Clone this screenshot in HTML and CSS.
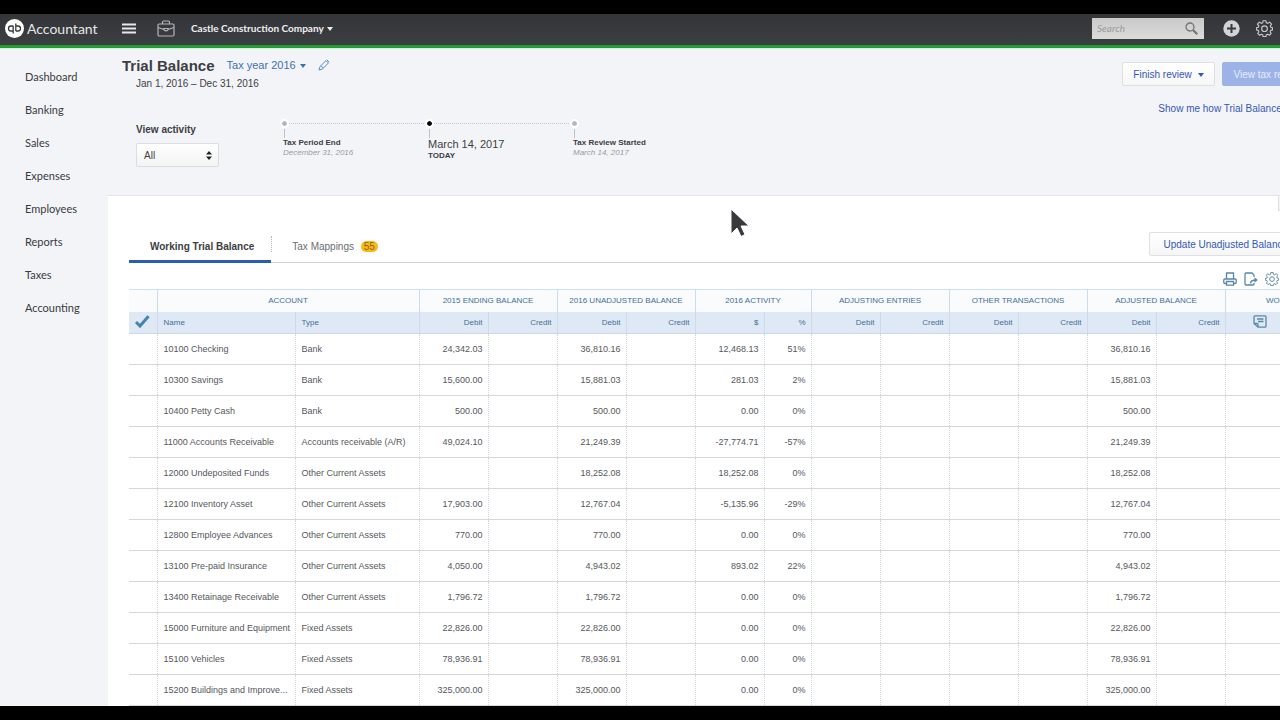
FILE: index.html
```html
<!DOCTYPE html>
<html lang="en">
<head>
    <meta charset="UTF-8">
    <meta name="viewport" content="width=device-width, initial-scale=1.0">
    <title>Trial Balance</title>
    <link rel="stylesheet" href="styles.css">
</head>
<body>
    <header class="topbar">
        <a class="brand" href="#">
            <svg width="19" height="19" viewBox="0 0 19 19" aria-hidden="true">
                <circle cx="9.5" cy="9.5" r="9.5" fill="#fff"/>
                <g fill="none" stroke="#38393c" stroke-width="1.3">
                    <path d="M8.2 6.800v7.800M8.200 7H6a2.500 2.500 0 0 0 0 5h2.200"/>
                    <path d="M10.800 4.400V12M10.800 12H13a2.500 2.500 0 0 0 0-5h-2.200"/>
                </g>
            </svg>
            <span>Accountant</span>
        </a>
        <button class="icon-btn menu-btn" aria-label="Menu">
            <svg width="14" height="11" viewBox="0 0 14 11"><path d="M0 1.5h14M0 5.5h14M0 9.5h14" stroke="#e8e8e8" stroke-width="2"/></svg>
        </button>
        <button class="icon-btn case-btn" aria-label="Accountant tools">
            <svg width="18" height="17" viewBox="0 0 18 17" fill="none" stroke="#b4b5b7" stroke-width="1.2">
                <rect x="1" y="4" width="16" height="12" rx="1.2"/>
                <path d="M5.5 4V2.2Q5.5 1 6.7 1h4.6q1.2 0 1.2 1.2V4M1 7.5l6 2M17 7.5l-6 2M7 8.5h4v1.3q-2 2-4 0z"/>
            </svg>
        </button>
        <button class="company">Castle Construction Company <span class="caret"></span></button>
        <form class="search">
            <input type="text" placeholder="Search" aria-label="Search">
            <button type="button" aria-label="Search">
                <svg width="13" height="13" viewBox="0 0 13 13" fill="none" stroke="#747474"><circle cx="5" cy="5" r="4" stroke-width="1.3"/><path d="M8 8l4.2 4.2" stroke-width="2.2"/></svg>
            </button>
        </form>
        <button class="icon-btn" aria-label="Create">
            <svg width="17" height="17" viewBox="0 0 17 17"><circle cx="8.5" cy="8.5" r="8.2" fill="#d2d3d4"/><path d="M8.5 4v9M4 8.5h9" stroke="#38393c" stroke-width="2"/></svg>
        </button>
        <button class="icon-btn gear-btn" aria-label="Settings">
            <svg width="17" height="17" viewBox="0 0 24 24" fill="none" stroke="#c8c9ca" stroke-width="1.6" stroke-linejoin="round"><use href="#gear"/></svg>
        </button>
    </header>

    <div class="layout">
        <nav class="sidebar">
            <a href="#">Dashboard</a>
            <a href="#">Banking</a>
            <a href="#">Sales</a>
            <a href="#">Expenses</a>
            <a href="#">Employees</a>
            <a href="#">Reports</a>
            <a href="#">Taxes</a>
            <a href="#">Accounting</a>
        </nav>

        <main>
            <section class="summary">
                <div class="summary-left">
                    <div class="title-row">
                        <h1>Trial Balance</h1>
                        <button class="year">Tax year 2016 <span class="caret"></span></button>
                        <button class="icon-btn" aria-label="Edit">
                            <svg width="12" height="12" viewBox="0 0 12 12" fill="none" stroke="#5b8fbe"><path d="M1 11l.9-3.3L8 1.6l2.4 2.4L4.3 10.1zM8.8.8l2.4 2.4M3 6.8l2.3 2.3"/></svg>
                        </button>
                    </div>
                    <p class="period">Jan 1, 2016 – Dec 31, 2016</p>
                    <div class="filters">
                        <div class="filter">
                            <label for="activity">View activity</label>
                            <div class="select">
                                <select id="activity"><option>All</option></select>
                                <svg width="6" height="9" viewBox="0 0 6 9" fill="#222"><path d="M0 3.6L3 0l3 3.6zM0 5.4h6L3 9z"/></svg>
                            </div>
                        </div>
                        <ol class="timeline">
                            <li><strong>Tax Period End</strong><em>December 31, 2016</em></li>
                            <li class="today"><span>March 14, 2017</span><strong>TODAY</strong></li>
                            <li><strong>Tax Review Started</strong><em>March 14, 2017</em></li>
                        </ol>
                    </div>
                </div>
                <div class="summary-right">
                    <div class="actions">
                        <button class="btn">Finish review <span class="caret"></span></button>
                        <button class="btn primary">View tax return</button>
                    </div>
                    <a href="#">Show me how Trial Balance works</a>
                </div>
            </section>

            <section class="panel">
                <button class="handle" aria-label="Collapse"></button>
                <div class="tabs">
                    <button class="tab active">Working Trial Balance</button>
                    <button class="tab">Tax Mappings <span class="badge">55</span></button>
                    <button class="btn update">Update Unadjusted Balances</button>
                </div>
                <div class="tools">
                    <button class="icon-btn" aria-label="Print">
                        <svg width="14" height="14" viewBox="0 0 14 14" fill="none" stroke="#5a87a5" stroke-width="1.3"><path d="M3.5 7V1h7v6M3 11.5H1.8Q.8 11.5.8 10.500V8q0-1 1-1h10.400q1 0 1 1v2.500q0 1-1 1H11M3.500 9.500h7v3.700h-7z"/></svg>
                    </button>
                    <button class="icon-btn" aria-label="Export">
                        <svg width="14" height="14" viewBox="0 0 14 14" fill="none" stroke="#5a87a5" stroke-width="1.3"><path d="M10 5V3L8 1H2Q1 1 1 2v10q0 1 1 1h7q1 0 1-1v-1M6.500 11.500Q6.500 8 12.500 8"/><path d="M10.500 5.200L13.800 8l-3.300 2.800z" fill="#5a87a5" stroke="none"/></svg>
                    </button>
                    <button class="icon-btn" aria-label="Table settings">
                        <svg width="14" height="14" viewBox="0 0 24 24" fill="none" stroke="#5a87a5" stroke-width="1.7" stroke-linejoin="round"><g id="gear"><path d="M10 1h4l.6 3 2 .8L19.200 3 22 5.800 20.200 8.400l.8 2 2.500.6v3l-2.700.6-.8 2L21.500 19 19 21.500l-2.400-1.500-2 .8L14 23.500h-4l-.6-2.700-2-.8L5 21.500 2.500 19 4 16.600l-.8-2L.5 14v-3L3.200 10.400l.8-2L2 5.800 4.800 3 7.400 4.800l2-.8z"/><circle cx="12" cy="12.200" r="4"/></g></svg>
                    </button>
                </div>

                <table>
                    <colgroup>
                        <col class="c-check"><col class="c-name"><col class="c-type">
                        <col class="c-num"><col class="c-num"><col class="c-num"><col class="c-num">
                        <col class="c-num"><col class="c-pct">
                        <col class="c-num"><col class="c-num"><col class="c-num"><col class="c-num">
                        <col class="c-num"><col class="c-num"><col class="c-num"><col class="c-num">
                    </colgroup>
                    <thead>
                        <tr class="groups">
                            <th></th>
                            <th colspan="2">ACCOUNT</th>
                            <th colspan="2">2015 ENDING BALANCE</th>
                            <th colspan="2">2016 UNADJUSTED BALANCE</th>
                            <th colspan="2">2016 ACTIVITY</th>
                            <th colspan="2">ADJUSTING ENTRIES</th>
                            <th colspan="2">OTHER TRANSACTIONS</th>
                            <th colspan="2">ADJUSTED BALANCE</th>
                            <th colspan="2">WORKPAPERS</th>
                        </tr>
                        <tr class="fields">
                            <th class="mark"><svg width="15" height="13" viewBox="0 0 15 13" fill="none" stroke="#4583b0" stroke-width="3"><path d="M1 7l4 4L13.500 1.200"/></svg></th>
                            <th class="text">Name</th>
                            <th class="text">Type</th>
                            <th>Debit</th><th>Credit</th>
                            <th>Debit</th><th>Credit</th>
                            <th>$</th><th>%</th>
                            <th>Debit</th><th>Credit</th>
                            <th>Debit</th><th>Credit</th>
                            <th>Debit</th><th>Credit</th>
                            <th class="mark"><svg width="14" height="13" viewBox="0 0 14 13" fill="none" stroke="#5a87a5" stroke-width="1.3"><path d="M2 .8h10q1 0 1 1v9.400q0 1-1 1H5L1 8.500V1.800q0-1 1-1zM1 8.500h3q1 0 1 1v2.700M4 4h6.500M5 6.500h5.500"/></svg></th>
                            <th></th>
                        </tr>
                    </thead>
                    <tbody id="rows"></tbody>
                </table>
            </section>
        </main>
    </div>

    <svg class="cursor" width="20" height="30" viewBox="0 0 20 30" aria-hidden="true"><path d="M1 1v25l6-6 4 8.500 4-2L11 18h8z" fill="#38393c" stroke="#fff"/></svg>

    <script>
        // name, type, 2015 balance, 2016 balance, change, change %
        const accounts = [
            ['10100 Checking', 'Bank', '24,342.03', '36,810.16', '12,468.13', '51%'],
            ['10300 Savings', 'Bank', '15,600.00', '15,881.03', '281.03', '2%'],
            ['10400 Petty Cash', 'Bank', '500.00', '500.00', '0.00', '0%'],
            ['11000 Accounts Receivable', 'Accounts receivable (A/R)', '49,024.10', '21,249.39', '-27,774.71', '-57%'],
            ['12000 Undeposited Funds', 'Other Current Assets', '', '18,252.08', '18,252.08', '0%'],
            ['12100 Inventory Asset', 'Other Current Assets', '17,903.00', '12,767.04', '-5,135.96', '-29%'],
            ['12800 Employee Advances', 'Other Current Assets', '770.00', '770.00', '0.00', '0%'],
            ['13100 Pre-paid Insurance', 'Other Current Assets', '4,050.00', '4,943.02', '893.02', '22%'],
            ['13400 Retainage Receivable', 'Other Current Assets', '1,796.72', '1,796.72', '0.00', '0%'],
            ['15000 Furniture and Equipment', 'Fixed Assets', '22,826.00', '22,826.00', '0.00', '0%'],
            ['15100 Vehicles', 'Fixed Assets', '78,936.91', '78,936.91', '0.00', '0%'],
            ['15200 Buildings and Improve...', 'Fixed Assets', '325,000.00', '325,000.00', '0.00', '0%']
        ];

        document.getElementById('rows').innerHTML = accounts.map(([name, type, prev, cur, diff, pct]) => `
            <tr>
                <td></td>
                <td class="text">${name}</td>
                <td class="text">${type}</td>
                <td>${prev}</td><td></td>
                <td>${cur}</td><td></td>
                <td>${diff}</td><td>${pct}</td>
                <td></td><td></td>
                <td></td><td></td>
                <td>${cur}</td><td></td>
                <td></td><td></td>
            </tr>
        `).join('');
    </script>
</body>
</html>
```

FILE: styles.css
```css
* {
    box-sizing: border-box;
}

body {
    margin: 0;
    padding: 14px 0;
    height: 100vh;
    display: flex;
    flex-direction: column;
    overflow: hidden;
    background: #000;
    color: #3c3e42;
    font-family: "Liberation Sans", Arial, sans-serif;
    font-size: 10px;
}

button {
    margin: 0;
    padding: 0;
    border: none;
    background: none;
    color: inherit;
    font: inherit;
    cursor: pointer;
    white-space: nowrap;
}

a {
    color: #3358b8;
    text-decoration: none;
}

.icon-btn {
    display: flex;
}

.caret {
    display: inline-block;
    margin-left: 1px;
    border: 3px solid transparent;
    border-top: 4px solid currentColor;
    border-bottom: none;
    vertical-align: 1px;
}

/* Top bar */
.topbar {
    flex: none;
    display: flex;
    align-items: center;
    height: 34px;
    padding: 0 7px 3px 5px;
    background: linear-gradient(#333538, #3c3f42);
    border-bottom: 3px solid #1f9d2f;
    color: #f0f0f0;
    font-family: Lato, sans-serif;
}

.brand {
    display: flex;
    align-items: center;
    gap: 3px;
    width: 117px;
    color: #e6e6e6;
    font-size: 14px;
}

.case-btn {
    margin: 0 16px 0 21px;
}

.company {
    font-size: 10px;
    font-weight: bold;
}

.search {
    display: flex;
    align-items: center;
    width: 112px;
    height: 21px;
    margin: 0 19px 0 auto;
    padding: 0 6px 0 5px;
    background: linear-gradient(#c9c9c9, #dcdcdc);
}

.search input {
    flex: 1;
    min-width: 0;
    padding: 0;
    border: none;
    outline: none;
    background: none;
    font: italic 10px Lato, sans-serif;
}

.search input::placeholder {
    color: #999;
}

.search button {
    display: flex;
}

.gear-btn {
    margin-left: 16px;
}

/* Sidebar */
.layout {
    flex: 1;
    display: flex;
    min-height: 0;
    background: #f3f4f8;
    box-shadow: inset 0 1px #d3f0d8;
}

.sidebar {
    flex: none;
    width: 108px;
    padding: 12px 0 0 25px;
    font-family: Lato, sans-serif;
    font-size: 11px;
}

.sidebar a {
    display: block;
    line-height: 33px;
    color: #393a3d;
}

main {
    flex: 1;
    min-width: 0;
    display: flex;
    flex-direction: column;
    overflow: hidden;
}

/* Title, filters and review actions */
.summary {
    flex: none;
    display: flex;
    justify-content: space-between;
    min-width: 1203px;
    height: 147px;
    padding: 8px 0 0 14px;
}

.title-row {
    display: flex;
    align-items: center;
    gap: 12px;
    height: 18px;
}

h1 {
    margin: 0;
    font-size: 15px;
}

.year {
    color: #3c72a8;
    font-size: 11px;
}

.period {
    margin: 4px 0 0 14px;
    line-height: 12px;
}

.filters {
    display: flex;
    gap: 64px;
    margin: 32px 0 0 14px;
}

.filter label {
    display: block;
    padding-top: 1px;
    line-height: 14px;
    font-weight: bold;
}

.select {
    position: relative;
    width: 83px;
    margin-top: 6px;
}

.select select {
    width: 100%;
    height: 24px;
    padding: 0 7px;
    border: 1px solid #dcdde1;
    border-radius: 2px;
    appearance: none;
    background: linear-gradient(#fff, #f4f4f5);
    color: inherit;
    font: inherit;
}

.select svg {
    position: absolute;
    right: 7px;
    top: 8px;
    pointer-events: none;
}

.timeline {
    display: flex;
    margin: 0;
    padding: 0;
    list-style: none;
}

.timeline li {
    position: relative;
    width: 145px;
    margin-top: 1px;
    padding-top: 14px;
    border-top: 1px dotted #c4c6ca;
    font-size: 8px;
    line-height: 10px;
}

.timeline li:last-child {
    border-top-color: transparent;
}

/* the dot, and the short line down to its text */
.timeline li::before {
    content: "";
    position: absolute;
    left: -3px;
    top: -5px;
    width: 5px;
    height: 5px;
    border: 2px solid #fff;
    border-radius: 50%;
    background: #b4b5b8;
    background-clip: padding-box;
}

.timeline li::after {
    content: "";
    position: absolute;
    left: 1px;
    top: 5px;
    height: 9px;
    border-left: 1px solid #c0c1c5;
}

.timeline li.today::before {
    background-color: #000;
}

.timeline strong,
.timeline em,
.timeline span {
    display: block;
}

.timeline em {
    color: #999ba0;
}

.timeline span {
    font-size: 11px;
    line-height: 13px;
}

.summary-right {
    padding-top: 6px;
}

.actions {
    display: flex;
    gap: 7px;
    margin: 0 0 17px -36px;
}

.btn {
    height: 24px;
    padding: 0 10px;
    border: 1px solid #dfe0e4;
    border-radius: 2px;
    background: linear-gradient(#fff, #f6f6f7);
    color: #3358b8;
}

.btn .caret {
    margin-left: 4px;
}

.btn.primary {
    border-color: #9db2e6;
    background: #9db2e6;
    color: #e6ecfb;
}

/* Working area */
.panel {
    flex: 1;
    min-width: 1240px;
    display: flex;
    flex-direction: column;
    padding-left: 21px;
    border-top: 1px solid #e3e5e9;
    background: #fff;
}

.handle {
    align-self: flex-end;
    width: 70px;
    height: 15px;
    border: 1px solid #dfe0e4;
    border-top: none;
    background: #f3f4f8;
}

.tabs {
    display: flex;
    align-items: flex-end;
    margin-top: 19px;
    border-bottom: 1px solid #cfd0d3;
}

.tab {
    position: relative;
    height: 33px;
    margin-bottom: -1px;
    padding: 2px 17px 0 21px;
    border-bottom: 3px solid transparent;
    color: #6b6c72;
}

.tab + .tab::before {
    content: "";
    position: absolute;
    left: 0;
    top: 6px;
    height: 16px;
    border-left: 1px dotted #b4b5b8;
}

.tab.active {
    border-bottom-color: #2f5bb0;
    color: #3c3e42;
    font-weight: bold;
}

.badge {
    margin-left: 4px;
    padding: 0 3px;
    border-radius: 6px;
    background: #fdb913;
    color: #866a1c;
}

.update {
    margin: 0 41px 6px auto;
    padding: 0 13px;
}

.tools {
    display: flex;
    align-items: center;
    justify-content: flex-end;
    gap: 7px;
    height: 26px;
    padding: 6px 69px 0 0;
}

table {
    table-layout: fixed;
    width: 1234px;
    border-collapse: collapse;
}

.c-check { width: 28px; }
.c-name { width: 138px; }
.c-type { width: 124px; }
.c-num { width: 69px; }
.c-pct { width: 47px; }

th {
    height: 22px;
    padding: 0 5px;
    border-left: 1px solid #cddcea;
    color: #436f98;
    font-size: 8px;
    font-weight: normal;
    text-align: right;
}

.groups th {
    border-top: 1px solid #cfe0ee;
    background: #f9fbfd;
    text-align: center;
}

.fields th {
    border-bottom: 1px solid #c9d9e8;
    background: #dfe9f5;
}

th.mark {
    padding: 0;
    text-align: center;
}

td {
    height: 31px;
    padding: 0 5px;
    border-bottom: 1px solid #d6d7d9;
    border-left: 1px dotted #d3d9e0;
    color: #55575c;
    font-size: 9px;
    text-align: right;
    white-space: nowrap;
}

th.text,
td.text {
    padding: 0 0 0 6px;
    text-align: left;
}

th:first-child,
td:first-child {
    border-left: none;
}

.cursor {
    position: absolute;
    left: 730px;
    top: 208px;
}
```
